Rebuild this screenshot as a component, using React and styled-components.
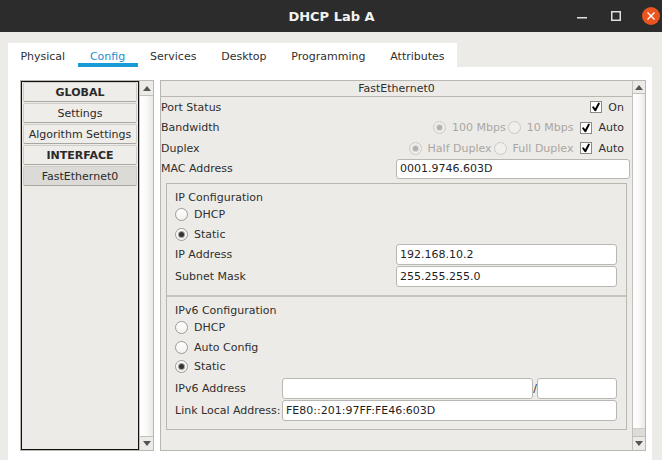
import React from 'react'
import styled, { createGlobalStyle } from 'styled-components'

const GlobalStyle = createGlobalStyle`
    html, body {
        margin: 0;
        padding: 0;
        background: #edebe7;
    }
    body {
        font-family: "DejaVu Sans", "Liberation Sans", sans-serif;
        font-size: 11px;
        color: #2f2f2f;
    }
    * {
        box-sizing: border-box;
    }
`

const Window = styled.div`
    width: 662px;
    height: 460px;
    display: flex;
    flex-direction: column;
    overflow: hidden;
    background: #edebe7;
`

const TitleBar = styled.div`
    height: 32px;
    flex: none;
    background: #2c2c2c;
    display: grid;
    grid-template-columns: 1fr auto 1fr;
    align-items: center;
`

const Title = styled.div`
    grid-column: 2;
    font-weight: bold;
    font-size: 13px;
    color: #f2f2f2;
    padding-left: 1px;
`

const WindowButtons = styled.div`
    grid-column: 3;
    justify-self: end;
    display: flex;
    align-items: center;
    padding-right: 2px;
`

const WinBtn = styled.span`
    display: flex;
    align-items: center;
    justify-content: center;
    margin-left: ${props => props.$gap || 0}px;
`

const CloseBtn = styled.span`
    width: 18px;
    height: 18px;
    border-radius: 50%;
    background: #e9541f;
    display: flex;
    align-items: center;
    justify-content: center;
    margin-left: 21px;
`

const Body = styled.div`
    flex: 1;
    display: flex;
    flex-direction: column;
    padding: 11px 10px 0 8px;
    min-height: 0;
`

const TabStrip = styled.div`
    align-self: flex-start;
    display: flex;
    background: #ffffff;
    height: 24px;
`

const Tab = styled.div`
    height: 24px;
    display: flex;
    align-items: center;
    padding: 2px 12.4px 0;
    color: ${props => props.$active ? '#1b8dd0' : '#2f2f2f'};
    box-shadow: ${props => props.$active ? 'inset 0 -4px 0 #1a9ad6' : 'none'};
`

const Content = styled.div`
    flex: 1;
    background: #ffffff;
    display: flex;
    gap: 6px;
    padding: 13px 6px 9px 12px;
    min-height: 0;
`

const SidePanel = styled.div`
    width: 134px;
    flex: none;
    display: flex;
    border: 1px solid #b9b7b2;
`

const NavList = styled.div`
    flex: 1;
    border: 1px solid #111;
    background: #edebe7;
    padding: 0 1px;
    display: flex;
    flex-direction: column;
    gap: 1px;
`

const NavItem = styled.div`
    height: 20px;
    display: flex;
    align-items: center;
    justify-content: center;
    border: 1px solid #cfcdc8;
    border-bottom-color: #a9a7a2;
    border-radius: 2px;
    background: ${props => props.$selected ? '#dcdad6' : '#efede9'};
    font-weight: ${props => props.$heading ? 'bold' : 'normal'};
    color: #2a2a2a;
`

const ScrollTrack = styled.div`
    width: ${props => props.$w}px;
    flex: none;
    display: flex;
    flex-direction: column;
    border-left: 1px solid #c2c0bb;
`

const ArrowBox = styled.div`
    height: ${props => props.$h}px;
    flex: none;
    display: flex;
    align-items: center;
    justify-content: center;
    background: #edebe7;
    border-top: ${props => props.$down ? '1px solid #c2c0bb' : 'none'};
    border-bottom: ${props => props.$down ? 'none' : '1px solid #c2c0bb'};
`

const TrackFill = styled.div`
    flex: 1;
    background: linear-gradient(to right, #ffffff, #fafaf9 50%, #ebe9e6);
`

const TrackBlock = styled.div`
    height: 8px;
    flex: none;
    background: #dedcd8;
    border-top: 1px solid #cfcdc8;
`

const ConfigPanel = styled.div`
    flex: 1;
    display: flex;
    border: 1px solid #b9b7b2;
    background: #edebe7;
`

const Main = styled.div`
    flex: 1;
    display: flex;
    flex-direction: column;
    min-width: 0;
`

const PanelHeader = styled.div`
    height: 16px;
    flex: none;
    display: flex;
    align-items: center;
    justify-content: center;
    border-bottom: 1px solid #b9b7b2;
    color: #2f2f2f;
`

const Row = styled.div`
    height: 20.5px;
    flex: none;
    display: flex;
    align-items: center;
    justify-content: space-between;
    padding: 0 2px 0 0;
`

const Controls = styled.div`
    display: flex;
    align-items: center;
    margin-right: 6px;
`

const Option = styled.label`
    display: flex;
    align-items: center;
    gap: 6px;
    margin-left: ${props => props.$gap || 0}px;
    color: ${props => props.$disabled ? '#a9a7a3' : '#2f2f2f'};
    white-space: nowrap;
`

const RadioDot = styled.span`
    width: 13px;
    height: 13px;
    flex: none;
    border-radius: 50%;
    border: 1px solid ${props => props.$disabled ? '#cbc9c5' : '#9d9b97'};
    background: ${props => props.$disabled ? '#f1efec' : 'linear-gradient(#ffffff, #f3f2f0)'};
    display: flex;
    align-items: center;
    justify-content: center;

    &::after {
        content: '';
        display: ${props => props.$checked ? 'block' : 'none'};
        width: 5px;
        height: 5px;
        border-radius: 50%;
        background: ${props => props.$disabled ? '#b3b1ad' : '#333'};
        box-shadow: 0 0 0 1px ${props => props.$disabled ? '#d8d6d2' : '#9f9d99'};
    }
`

const CheckBox = styled.span`
    width: 12px;
    height: 12px;
    flex: none;
    border: 1px solid #8a8884;
    background: #ffffff;
    display: flex;
    align-items: center;
    justify-content: center;
`

const Field = styled.div`
    height: ${props => props.$h || 21}px;
    width: ${props => props.$w ? `${props.$w}px` : 'auto'};
    flex: ${props => props.$w ? 'none' : 1};
    background: #ffffff;
    border: 1px solid #b9b7b2;
    border-radius: 3px;
    display: flex;
    align-items: center;
    padding-left: 3px;
    color: #1f1f1f;
    min-width: 0;
`

const Groups = styled.div`
    margin: 4px 5px 0 5px;
    border: 1px solid #b9b7b2;
`

const Group = styled.div`
    padding: 5px 9px 7px 8px;
    border-top: ${props => props.$first ? 'none' : '2px solid #c6c4bf'};
    display: flex;
    flex-direction: column;
`

const GroupTitle = styled.div`
    height: 16px;
    display: flex;
    align-items: center;
`

const RadioRow = styled.div`
    height: 19.5px;
    display: flex;
    align-items: center;
`

const FieldRow = styled.div`
    display: flex;
    align-items: center;
    margin-top: ${props => props.$mt || 0}px;
    margin-bottom: 1px;
`

const FieldLabel = styled.div`
    width: ${props => props.$w}px;
    flex: none;
    white-space: nowrap;
`

const Slash = styled.span`
    width: 4px;
    flex: none;
    text-align: center;
`

const Arrow = ({ down }) => (
    <svg width="8" height="5" viewBox="0 0 8 5">
        <path d={down ? 'M0 0 H8 L4 5 Z' : 'M0 5 H8 L4 0 Z'} fill="#555" />
    </svg>
)

const ScrollBar = ({ w, upH, downH, block }) => (
    <ScrollTrack $w={w}>
        <ArrowBox $h={upH}><Arrow /></ArrowBox>
        <TrackFill />
        {block && <TrackBlock />}
        <ArrowBox $h={downH} $down><Arrow down /></ArrowBox>
    </ScrollTrack>
)

const Tick = () => (
    <svg width="10" height="10" viewBox="0 0 10 10">
        <path d="M2.2 5.2 L4.3 8.2 L7.8 1.6" stroke="#000" strokeWidth="2" fill="none" strokeLinecap="round" strokeLinejoin="round" />
    </svg>
)

const Radio = ({ label, checked, disabled, gap }) => (
    <Option $disabled={disabled} $gap={gap}>
        <RadioDot $checked={checked} $disabled={disabled} />
        {label}
    </Option>
)

const Check = ({ label, gap }) => (
    <Option $gap={gap}>
        <CheckBox><Tick /></CheckBox>
        {label}
    </Option>
)

const tabs = ['Physical', 'Config', 'Services', 'Desktop', 'Programming', 'Attributes']
const navItems = [
    { label: 'GLOBAL', heading: true },
    { label: 'Settings' },
    { label: 'Algorithm Settings' },
    { label: 'INTERFACE', heading: true },
    { label: 'FastEthernet0', selected: true },
]

export default function App() {
    return (
        <Window>
            <GlobalStyle />
            <TitleBar>
                <Title>DHCP Lab A</Title>
                <WindowButtons>
                    <WinBtn>
                        <svg width="10" height="10" viewBox="0 0 10 10">
                            <rect x="0" y="6" width="10" height="1.5" fill="#e0e0e0" />
                        </svg>
                    </WinBtn>
                    <WinBtn $gap={24}>
                        <svg width="10" height="10" viewBox="0 0 10 10">
                            <rect x="0.75" y="0.75" width="8.5" height="8.5" fill="none" stroke="#e0e0e0" strokeWidth="1.5" />
                        </svg>
                    </WinBtn>
                    <CloseBtn>
                        <svg width="8" height="8" viewBox="0 0 8 8">
                            <path d="M0.5 0.5 L7.5 7.5 M7.5 0.5 L0.5 7.5" stroke="#fff" strokeWidth="1.4" />
                        </svg>
                    </CloseBtn>
                </WindowButtons>
            </TitleBar>
            <Body>
                <TabStrip>
                    {tabs.map(t => (
                        <Tab key={t} $active={t === 'Config'}>{t}</Tab>
                    ))}
                </TabStrip>
                <Content>
                    <SidePanel>
                        <NavList>
                            {navItems.map(i => (
                                <NavItem key={i.label} $heading={i.heading} $selected={i.selected}>{i.label}</NavItem>
                            ))}
                        </NavList>
                        <ScrollBar w={14} upH={15} downH={14} />
                    </SidePanel>
                    <ConfigPanel>
                        <Main>
                            <PanelHeader>FastEthernet0</PanelHeader>
                            <Row>
                                <span>Port Status</span>
                                <Controls><Check label="On" /></Controls>
                            </Row>
                            <Row>
                                <span>Bandwidth</span>
                                <Controls>
                                    <Radio label="100 Mbps" checked disabled />
                                    <Radio label="10 Mbps" disabled gap={2} />
                                    <Check label="Auto" gap={7} />
                                </Controls>
                            </Row>
                            <Row>
                                <span>Duplex</span>
                                <Controls>
                                    <Radio label="Half Duplex" checked disabled />
                                    <Radio label="Full Duplex" disabled gap={2} />
                                    <Check label="Auto" gap={7} />
                                </Controls>
                            </Row>
                            <Row>
                                <span>MAC Address</span>
                                <Field $w={234} $h={20}>0001.9746.603D</Field>
                            </Row>
                            <Groups>
                                <Group $first>
                                    <GroupTitle>IP Configuration</GroupTitle>
                                    <RadioRow><Radio label="DHCP" /></RadioRow>
                                    <RadioRow><Radio label="Static" checked /></RadioRow>
                                    <FieldRow>
                                        <FieldLabel $w={221}>IP Address</FieldLabel>
                                        <Field>192.168.10.2</Field>
                                    </FieldRow>
                                    <FieldRow>
                                        <FieldLabel $w={221}>Subnet Mask</FieldLabel>
                                        <Field>255.255.255.0</Field>
                                    </FieldRow>
                                </Group>
                                <Group>
                                    <GroupTitle>IPv6 Configuration</GroupTitle>
                                    <RadioRow><Radio label="DHCP" /></RadioRow>
                                    <RadioRow><Radio label="Auto Config" /></RadioRow>
                                    <RadioRow><Radio label="Static" checked /></RadioRow>
                                    <FieldRow $mt={1}>
                                        <FieldLabel $w={107}>IPv6 Address</FieldLabel>
                                        <Field />
                                        <Slash>/</Slash>
                                        <Field $w={80} />
                                    </FieldRow>
                                    <FieldRow>
                                        <FieldLabel $w={107}>Link Local Address:</FieldLabel>
                                        <Field>FE80::201:97FF:FE46:603D</Field>
                                    </FieldRow>
                                </Group>
                            </Groups>
                        </Main>
                        <ScrollBar w={13} upH={13} downH={14} block />
                    </ConfigPanel>
                </Content>
            </Body>
        </Window>
    )
}
